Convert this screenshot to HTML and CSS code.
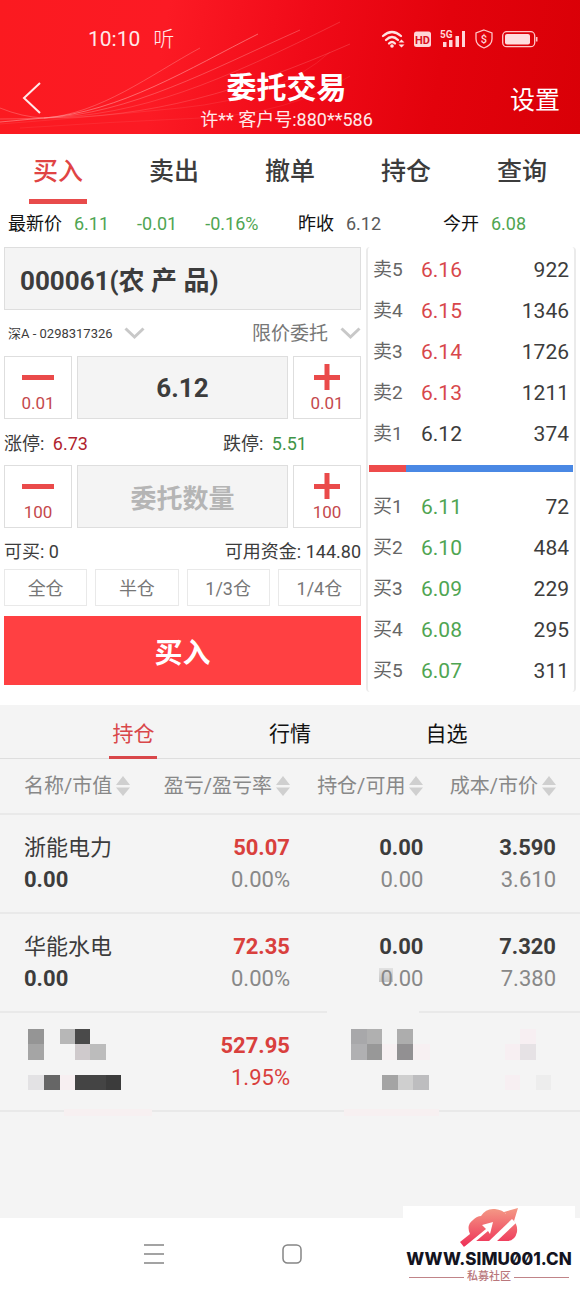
FILE: index.html
```html
<!DOCTYPE html>
<html lang="zh-CN">
<head>
<meta charset="utf-8">
<meta name="viewport" content="width=device-width, initial-scale=1">
<title>委托交易</title>
<link rel="stylesheet" href="styles.css">
</head>
<body>
<div class="app">
  <header class="header">
    <svg class="header-lines" viewBox="0 0 580 134" preserveAspectRatio="none" aria-hidden="true">
      <g fill="none" stroke="#ff9c9c">
        <path d="M0 108Q22 117 44 118C100 114 150 75 200 48" opacity=".4"/>
        <path d="M0 122Q22 120 44 118C120 112 190 68 258 34" opacity=".6"/>
        <path d="M0 119Q22 119 44 118C130 114 210 70 300 30" opacity=".4"/>
        <path d="M44 118C140 116 220 82 340 22" opacity=".25"/>
        <path d="M44 118C150 118 240 92 350 44" opacity=".25"/>
        <path d="M0 124Q80 118 180 108T330 52" opacity=".15"/>
        <path d="M20 128Q110 122 200 118T350 76" opacity=".12"/>
      </g>
    </svg>
    <div class="status">
      <span class="clock">10:10</span>
      <span class="listen">听</span>
      <div class="status-icons">
        <svg width="24" height="20" viewBox="0 0 24 20" aria-label="Wi-Fi" role="img">
          <g fill="none" stroke="#ffe3e3" stroke-width="2.3" stroke-linecap="round">
            <path d="M2 7Q11-1 20 7M5 11Q11 5 17 11M8 14.500Q11 11.500 14 14.500"/>
          </g>
          <circle cx="11" cy="17" r="1.800" fill="#ffe3e3"/>
          <path d="M17.500 13.500L20.500 10.500L23.500 13.500ZM17.500 15.500L20.500 18.500L23.500 15.500Z" fill="#ffe3e3"/>
        </svg>
        <svg width="17" height="20" viewBox="0 0 17 20" aria-label="HD" role="img">
          <rect y="2.500" width="17" height="15.500" rx="2.500" fill="#ffd6d8"/>
          <text x="8.500" y="14.500" text-anchor="middle" class="hd-text">HD</text>
        </svg>
        <svg width="26" height="20" viewBox="0 0 26 20" aria-label="5G" role="img">
          <path d="M3 13h3.500v5H3ZM9 11h3.500v7H9ZM15.500 7H19v11h-3.500ZM22 2h3v16h-3Z" fill="#ffd6d8"/>
          <text x="0" y="9" class="net-text">5G</text>
        </svg>
        <svg width="18" height="20" viewBox="0 0 18 20" aria-label="安全" role="img">
          <path d="M9 1L17 4V10Q17 16 9 19Q1 16 1 10V4Z" fill="none" stroke="#ffc4c6" stroke-width="1.300"/>
          <text x="9" y="14" text-anchor="middle" class="shield-text">$</text>
        </svg>
        <svg width="36" height="20" viewBox="0 0 36 20" aria-label="电池" role="img">
          <rect x=".700" y="2.700" width="32" height="15" rx="4" fill="none" stroke="#ffc4c6" stroke-width="1.300"/>
          <rect x="3" y="5" width="25" height="10.500" rx="2" fill="#ffdcde"/>
          <path d="M34.700 8v4.500" stroke="#ffc4c6" stroke-width="1.600"/>
        </svg>
      </div>
    </div>
    <div class="titlebar">
      <button class="back" type="button" aria-label="返回">
        <svg width="20" height="34" viewBox="0 0 20 34"><path d="M18 1L2 16L18 31" fill="none" stroke="#ffe9e9" stroke-width="2"/></svg>
      </button>
      <div class="title">
        <h1>委托交易</h1>
        <p>许** 客户号:880**586</p>
      </div>
      <a class="settings" href="#settings">设置</a>
    </div>
  </header>

  <nav class="main-tabs">
    <a class="active" href="#buy">买入</a>
    <a href="#sell">卖出</a>
    <a href="#cancel">撤单</a>
    <a href="#hold">持仓</a>
    <a href="#query">查询</a>
  </nav>

  <section class="quote" aria-label="行情">
    <div class="quote-last"><span>最新价</span><span class="down">6.11</span><span class="down delta">-0.01</span><span class="down delta">-0.16%</span></div>
    <div><span>昨收</span><span class="muted">6.12</span></div>
    <div><span>今开</span><span class="down">6.08</span></div>
  </section>

  <main class="trade">
    <form class="order">
      <input class="field stock" type="text" aria-label="证券代码" value="000061(农 产 品)">
      <div class="selects">
        <label class="pick account">
          <select aria-label="股东账户"><option>深A - 0298317326</option></select>
          <svg width="21" height="12" viewBox="0 0 21 12"><path d="M1.500 1.500L10.500 10L19.500 1.500" fill="none" stroke="#c8c8c8" stroke-width="3"/></svg>
        </label>
        <label class="pick kind">
          <select aria-label="委托类型"><option>限价委托</option></select>
          <svg width="21" height="12" viewBox="0 0 21 12"><path d="M1.500 1.500L10.500 10L19.500 1.500" fill="none" stroke="#c8c8c8" stroke-width="3"/></svg>
        </label>
      </div>
      <div class="stepper">
        <button type="button" aria-label="减少价格 0.01"><svg width="32" height="26" viewBox="0 0 32 26"><path d="M0 13.500H32" stroke="#ea4a4a" stroke-width="5"/></svg><span>0.01</span></button>
        <input class="field price" type="text" aria-label="委托价格" value="6.12">
        <button type="button" aria-label="增加价格 0.01"><svg width="32" height="26" viewBox="0 0 32 26"><path d="M3 13.500H29M16 0V26" stroke="#ea4a4a" stroke-width="5"/></svg><span>0.01</span></button>
      </div>
      <div class="limits">
        <p>涨停: <b class="limit-up">6.73</b></p>
        <p>跌停: <b class="limit-down">5.51</b></p>
      </div>
      <div class="stepper">
        <button type="button" aria-label="减少数量 100"><svg width="32" height="26" viewBox="0 0 32 26"><path d="M0 13.500H32" stroke="#ea4a4a" stroke-width="5"/></svg><span>100</span></button>
        <input class="field amount" type="text" aria-label="委托数量" placeholder="委托数量">
        <button type="button" aria-label="增加数量 100"><svg width="32" height="26" viewBox="0 0 32 26"><path d="M3 13.500H29M16 0V26" stroke="#ea4a4a" stroke-width="5"/></svg><span>100</span></button>
      </div>
      <div class="funds"><p>可买: 0</p><p>可用资金: 144.80</p></div>
      <div class="portions">
        <button type="button">全仓</button>
        <button type="button">半仓</button>
        <button type="button">1/3仓</button>
        <button type="button">1/4仓</button>
      </div>
      <button class="submit" type="button">买入</button>
    </form>

    <aside class="book">
      <table>
        <tr><th scope="row">卖5</th><td class="ask">6.16</td><td>922</td></tr>
        <tr><th scope="row">卖4</th><td class="ask">6.15</td><td>1346</td></tr>
        <tr><th scope="row">卖3</th><td class="ask">6.14</td><td>1726</td></tr>
        <tr><th scope="row">卖2</th><td class="ask">6.13</td><td>1211</td></tr>
        <tr><th scope="row">卖1</th><td>6.12</td><td>374</td></tr>
      </table>
      <div class="ratio"><span style="width: 18%"></span></div>
      <table>
        <tr><th scope="row">买1</th><td class="bid">6.11</td><td>72</td></tr>
        <tr><th scope="row">买2</th><td class="bid">6.10</td><td>484</td></tr>
        <tr><th scope="row">买3</th><td class="bid">6.09</td><td>229</td></tr>
        <tr><th scope="row">买4</th><td class="bid">6.08</td><td>295</td></tr>
        <tr><th scope="row">买5</th><td class="bid">6.07</td><td>311</td></tr>
      </table>
    </aside>
  </main>

  <section class="positions">
    <nav class="sub-tabs">
      <a class="active" href="#positions">持仓</a>
      <a href="#market">行情</a>
      <a href="#watch">自选</a>
    </nav>
    <table class="holdings">
      <thead>
        <tr>
          <th scope="col"><button type="button">名称/市值<svg width="14" height="22" viewBox="0 0 14 22"><path d="M0 10L7 1L14 10ZM0 12.500L7 21L14 12.500Z" fill="#cfcfcf"/></svg></button></th>
          <th scope="col"><button type="button">盈亏/盈亏率<svg width="14" height="22" viewBox="0 0 14 22"><path d="M0 10L7 1L14 10ZM0 12.500L7 21L14 12.500Z" fill="#cfcfcf"/></svg></button></th>
          <th scope="col"><button type="button">持仓/可用<svg width="14" height="22" viewBox="0 0 14 22"><path d="M0 10L7 1L14 10ZM0 12.500L7 21L14 12.500Z" fill="#cfcfcf"/></svg></button></th>
          <th scope="col"><button type="button">成本/市价<svg width="14" height="22" viewBox="0 0 14 22"><path d="M0 10L7 1L14 10ZM0 12.500L7 21L14 12.500Z" fill="#cfcfcf"/></svg></button></th>
        </tr>
      </thead>
      <tbody>
        <tr>
          <td><span class="name">浙能电力</span><strong>0.00</strong></td>
          <td><strong class="gain">50.07</strong><span>0.00%</span></td>
          <td><strong>0.00</strong><span>0.00</span></td>
          <td><strong>3.590</strong><span>3.610</span></td>
        </tr>
        <tr>
          <td><span class="name">华能水电</span><strong>0.00</strong></td>
          <td><strong class="gain">72.35</strong><span>0.00%</span></td>
          <td><strong>0.00</strong><span class="smudged">0.00</span></td>
          <td><strong>7.320</strong><span>7.380</span></td>
        </tr>
        <tr>
          <td>
            <svg class="mosaic" width="100" height="64" viewBox="24 1030 100 64" shape-rendering="crispEdges" aria-hidden="true">
              <path d="M28 1029h16v15H28Z" fill="#959595"/><path d="M28 1044h16v16H28Z" fill="#a5a5a5"/>
              <path d="M60 1029h15v15H60Z" fill="#b7b7b7"/><path d="M75 1029h15v15H75Z" fill="#4a4a4a"/>
              <path d="M75 1044h15v16H75Z" fill="#cfcacc"/><path d="M90 1044h16v16H90Z" fill="#bcbcbc"/>
              <path d="M28 1075h16v15H28Z" fill="#e3e2e4"/><path d="M44 1075h16v15H44Z" fill="#666"/>
              <path d="M60 1075h15v15H60Z" fill="#f7eff1"/><path d="M75 1075h31v15H75Z" fill="#444"/><path d="M106 1075h15v15H106Z" fill="#3b3b3b"/>
              <path d="M64 1109h88v7H64Z" fill="#f7f0f1"/>
            </svg>
          </td>
          <td><strong class="gain">527.95</strong><span class="gain">1.95%</span></td>
          <td>
            <svg class="mosaic" width="80" height="64" viewBox="343 1030 80 64" shape-rendering="crispEdges" aria-hidden="true">
              <path d="M327 1009h92v6H327Z" fill="#f4f4f4"/>
              <path d="M351 1029h16v15H351Z" fill="#a8a8aa"/><path d="M367 1029h15v15H367Z" fill="#b0b0b0"/>
              <path d="M351 1044h16v16H351Z" fill="#b0b0b2"/><path d="M367 1044h15v16H367Z" fill="#989898"/>
              <path d="M397 1029h16v15H397Z" fill="#adadad"/><path d="M397 1044h16v16H397Z" fill="#929092"/>
              <path d="M382 1044h15v16H382ZM413 1044h17v16H413Z" fill="#f7f0f2"/>
              <path d="M382 1075h16v15H382Z" fill="#a4a4a4"/><path d="M398 1075h15v15H398Z" fill="#cfcfcf"/><path d="M413 1075h16v15H413Z" fill="#bdbdbf"/>
              <path d="M344 1109h95v7H344Z" fill="#f7f0f1"/>
            </svg>
          </td>
          <td>
            <svg class="mosaic" width="60" height="64" viewBox="496 1030 60 64" shape-rendering="crispEdges" aria-hidden="true">
              <path d="M520 1029h16v15H520ZM505 1044h15v16H505ZM505 1075h15v15H505Z" fill="#f7eff2"/>
              <path d="M520 1044h16v16H520Z" fill="#e6e2e5"/><path d="M536 1075h15v15H536Z" fill="#ededed"/>
            </svg>
          </td>
        </tr>
      </tbody>
    </table>
  </section>

  <footer class="system-bar">
    <button type="button" aria-label="菜单"><svg width="20" height="20" viewBox="0 0 20 20"><path d="M0 1H20M0 10H20M0 19H20" stroke="#858585" stroke-width="1.500"/></svg></button>
    <button type="button" aria-label="主屏幕"><svg width="20" height="20" viewBox="0 0 20 20"><rect x="1" y="1" width="18" height="18" rx="4.500" fill="none" stroke="#858585" stroke-width="1.500"/></svg></button>
    <div class="brand">
      <svg width="58" height="40" viewBox="0 0 58 40" aria-hidden="true">
        <defs><linearGradient id="cloud" x1="0" y1="0" x2="0" y2="1"><stop offset="0" stop-color="#f49a86"/><stop offset="1" stop-color="#ee2f57"/></linearGradient></defs>
        <path d="M0 35L10 27Q6 18 13 13Q17 9 21 9Q26 1 35 2Q43 3 46 7L44 5L58 1L54 14L52 12Q58 17 57 25Q55 34 47 34H15L4 40Z" fill="url(#cloud)"/>
        <path d="M4 40L26 22L22 18L33 15L30 27L28 24L15 35L10 40Z" fill="#fff"/>
        <path d="M28 35L52 12L54 14L56 16L36 35Z" fill="#fff"/>
      </svg>
      <p class="brand-url">WWW.SIMU001.CN</p>
      <p class="brand-name">私募社区</p>
    </div>
  </footer>
</div>
</body>
</html>
```
FILE: styles.css
```css
* { box-sizing: border-box; }

body {
  margin: 0;
  background: #fff;
  color: #3c3c3c;
  font-family: Roboto, "Noto Sans CJK SC", sans-serif;
  font-size: 18px;
  line-height: 1.3;
}

h1, p { margin: 0; }
a { color: inherit; text-decoration: none; }
button, input, select { font: inherit; color: inherit; margin: 0; padding: 0; border: 0; border-radius: 0; background: none; }
svg { display: block; flex: none; overflow: visible; }
table { width: 100%; border-collapse: collapse; table-layout: fixed; }

.app { display: flex; flex-direction: column; min-height: 100vh; }

/* Header */
.header {
  position: relative;
  padding-top: 26px;
  overflow: hidden;
  color: #fff;
  background: linear-gradient(100deg, #fb1a20 0%, #fc1a24 28%, #f00a18 52%, #e3020c 75%, #d90007 100%);
}
.header-lines { position: absolute; inset: 0; width: 100%; height: 100%; }
.status { position: relative; display: flex; align-items: center; height: 26px; padding: 0 42px 0 88px; color: #ffe9e9; line-height: 28px; }
.clock { font-size: 21px; }
.listen { margin-left: 13px; font-size: 21px; font-weight: 300; }
.status-icons { display: flex; gap: 9px; margin-left: auto; }
.hd-text { font: 700 11px Roboto, sans-serif; fill: #d9101c; }
.net-text { font: 700 10px Roboto, sans-serif; fill: #ffd6d8; }
.shield-text { font: 500 11px Roboto, sans-serif; fill: #ffd6d8; }
.titlebar {
  position: relative;
  display: grid;
  grid-template-columns: 1fr auto 1fr;
  align-items: center;
  padding: 12px 20px 0 22px;
}
.back { justify-self: start; }
.title { padding: 5px 9px 1px 0; text-align: center; }
.title h1 { font-size: 30px; line-height: 38px; font-weight: 700; }
.title p { line-height: 26px; color: #ffe9e9; }
.settings { justify-self: end; padding-top: 4px; font-size: 25px; line-height: 30px; }

/* Main tabs */
.main-tabs { display: grid; grid-template-columns: repeat(5, 1fr); justify-items: center; height: 70px; }
.main-tabs a {
  width: 50%;
  padding-top: 17px;
  border-bottom: 5px solid transparent;
  font-size: 25px;
  line-height: 42px;
  font-weight: 500;
  text-align: center;
  white-space: nowrap;
}
.main-tabs .active { color: #e04444; border-color: #e84b4b; }

/* Quote strip */
.quote {
  display: grid;
  grid-template-columns: 290fr 145fr 137fr;
  align-items: center;
  height: 43px;
  padding: 0 0 3px 8px;
  color: #111;
}
.quote div { display: flex; gap: 12px; }
.quote .delta { margin-left: 16px; }
.quote .down { color: #4fa552; }
.quote .muted { color: #5a5a5a; }

/* Trade area */
.trade { display: grid; grid-template-columns: 357fr 210fr; gap: 5px; padding: 0 4px; }
.order { min-width: 0; }
.field { width: 100%; min-width: 0; height: 63px; border: 1px solid #dedede; background: #f4f4f4; font-size: 26px; font-weight: 700; text-align: center; }
.stock { display: block; padding: 0 15px; text-align: left; }
.amount { padding-top: 4px; }
.amount::placeholder { color: #b5b5b5; opacity: 1; }
.selects { display: flex; justify-content: space-between; align-items: center; height: 46px; padding-left: 4px; }
.pick { display: flex; align-items: center; gap: 11px; }
.pick select { appearance: none; padding-top: 3px; }
.account { font-size: 13px; }
.kind { font-size: 19px; color: #777; }
.stepper { display: grid; grid-template-columns: 68fr 211fr 68fr; gap: 5px; }
.stepper button {
  display: flex;
  flex-direction: column;
  align-items: center;
  height: 63px;
  padding-top: 7px;
  border: 1px solid #dedede;
  font-size: 17px;
  line-height: 26px;
  color: #c4484c;
}
.limits { display: grid; grid-template-columns: 219fr 138fr; align-items: center; height: 46px; padding-top: 3px; }
.limits b { margin-left: 4px; font-weight: 400; }
.limit-up { color: #b01f2e; }
.limit-down { color: #3f9447; }
.funds { display: flex; justify-content: space-between; align-items: center; height: 41px; padding-top: 7px; }
.portions { display: grid; grid-template-columns: repeat(4, 1fr); gap: 8px; }
.portions button { height: 37px; padding-top: 3px; border: 1px solid #e9e9e9; color: #777; }
.submit { width: 100%; height: 69px; margin-top: 10px; padding-top: 7px; background: #ff4042; color: #fff; font-size: 28px; font-weight: 700; }

/* Order book */
.book { padding-top: 3px; border: solid #ebebeb; border-width: 0 2px; border-radius: 4px; }
.book tr { height: 41px; }
.book th, .book td { padding: 0; font-size: 21px; font-weight: 400; text-align: left; }
.book th { width: 53px; padding-left: 5px; font-size: 19px; color: #666; }
.book td:last-child { padding-right: 5px; text-align: right; }
.book .ask { color: #d8474b; }
.book .bid { color: #4fa552; }
.ratio { height: 7px; margin: 10px 1px 15px; background: #4a88e4; }
.ratio span { display: block; height: 100%; background: #ee4b4b; }

/* Positions */
.positions { flex: 1; margin-top: 13px; background: #f4f4f4; }
.sub-tabs { display: grid; grid-template-columns: repeat(3, 27%); justify-content: center; justify-items: center; height: 54px; border-bottom: 1px solid #dedede; color: #111; font-size: 21px; }
.sub-tabs a { height: 54px; padding: 0 3px; line-height: 58px; }
.sub-tabs .active { color: #d9474a; border-bottom: 3px solid #d9474a; }
.holdings tr { border-bottom: 2px solid #e9e9e9; }
.holdings th { width: 25%; height: 55px; padding: 0; font-size: 20px; font-weight: 400; color: #888; text-align: right; white-space: nowrap; }
.holdings th:nth-child(3) { width: 23%; }
.holdings th:nth-child(4) { width: 27%; }
.holdings button { display: inline-flex; align-items: center; gap: 4px; vertical-align: middle; line-height: 28px; }
.holdings td { height: 99px; padding: 0; font-size: 22px; line-height: 32px; color: #888; text-align: right; }
.holdings th:first-child, .holdings td:first-child { padding-left: 24px; text-align: left; }
.holdings th:last-child, .holdings td:last-child { padding-right: 24px; }
.holdings span, .holdings strong { display: block; }
.holdings strong, .holdings .name { color: #3c3c3c; }
.holdings .gain { color: #d9403d; }
.holdings .smudged { background: linear-gradient(#e2e2e2, #c6c6c6) left 5px / 14px 14px no-repeat; width: 44px; margin-left: auto; }
.mosaic { margin-left: auto; }
td:first-child .mosaic { margin-left: 0; }

/* System bar */
.system-bar { position: relative; display: flex; gap: 118px; align-items: center; height: 71px; padding-left: 144px; background: #fff; }
.brand {
  position: absolute;
  right: 5px;
  bottom: 0;
  display: flex;
  flex-direction: column;
  align-items: center;
  width: 172px;
  height: 83px;
  padding-top: 1px;
  background: #fff;
}
.brand-url { font: 800 17px/24px Inter, sans-serif; font-variant-numeric: slashed-zero; color: #14141f; }
.brand-name { display: flex; align-items: center; gap: 3px; width: 160px; font-size: 11px; line-height: 12px; font-weight: 500; color: #b9777c; white-space: nowrap; }
.brand-name::before, .brand-name::after { content: ""; flex: 1; height: 1px; background: #c08488; }
```
